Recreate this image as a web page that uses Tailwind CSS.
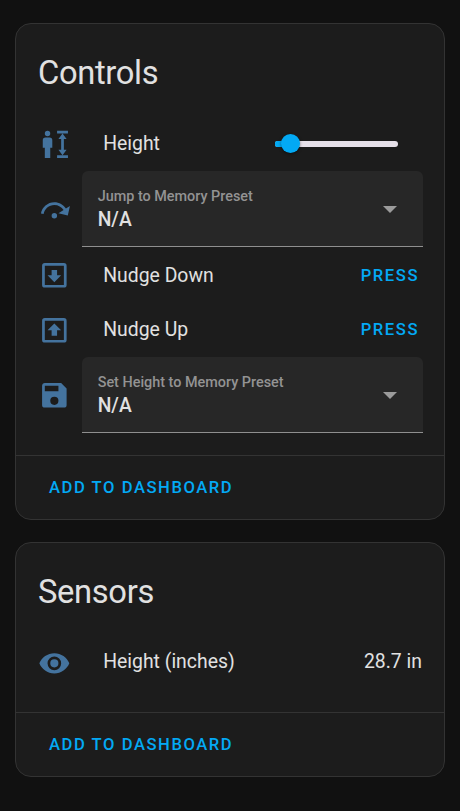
<!DOCTYPE html>
<html lang="en">
<head>
<meta charset="utf-8">
<title>Device</title>
<script src="https://cdn.jsdelivr.net/npm/@tailwindcss/browser@4"></script>
</head>
<body class="flex flex-col gap-[22px] bg-[#111111] px-[15px] pt-[23px] h-[811px] overflow-hidden font-[Roboto,sans-serif] text-[19.4px] text-[#e1e1e1]">
  <section class="flex h-[497px] shrink-0 flex-col rounded-[16px] border border-[#333333] bg-[#1c1c1c]">
    <h1 class="flex h-[93px] items-center pl-[22px] pt-[7px] text-[32.7px] tracking-[-0.01em]">Controls</h1>
    <div class="flex h-[54px] items-center pl-[22px] pr-[46px]">
      <svg class="size-[32.7px] shrink-0 fill-[#44739e]" viewBox="0 0 24 24"><path d="M7 2A2 2 0 1 1 7 6A2 2 0 0 1 7 2M5.5 7H8.5A2 2 0 0 1 10.5 9V14.5H9V22H5V14.5H3.5V9A2 2 0 0 1 5.5 7M14 2H22V4H14ZM14 20H22V22H14ZM18 4L21 8H19V16H21L18 20L15 16H17V8H15Z"/></svg>
      <span class="ml-[32.5px] grow">Height</span>
      <div class="relative h-[6px] w-[123px] rounded-[3px] bg-[#e6e0e9]">
        <div class="h-full w-[16px] rounded-l-[2px] bg-[#03a9f4]"></div>
        <div class="absolute -top-[7px] left-[6px] size-[19px] rounded-full bg-[#03a9f4] shadow-[0_1px_3px_rgba(0,0,0,0.5)]"></div>
      </div>
    </div>
    <div class="flex h-[76px] items-center pl-[22px] pr-[21px]">
      <svg class="mt-[2px] size-[32.7px] shrink-0 fill-[#44739e]" viewBox="0 0 24 24"><path d="M12 14A2 2 0 0 1 14 16A2 2 0 0 1 12 18A2 2 0 0 1 10 16A2 2 0 0 1 12 14M23.46 8.86L21.87 15.75L15 14.16L18.8 11.78C17.39 9.5 14.87 8 12 8C8.05 8 4.77 10.86 4.12 14.63L2.15 14.28C2.96 9.58 7.06 6 12 6C15.58 6 18.73 7.89 20.5 10.72L23.46 8.86Z"/></svg>
      <div class="ml-[11px] flex h-[76px] grow items-center justify-between rounded-t-[6px] border-b border-[#8f8f8f] bg-[#272727] pl-4 pr-[26px] pt-[2px]">
        <div class="flex flex-col">
          <span class="text-[14.4px] font-medium leading-[20px] text-[#939393]">Jump to Memory Preset</span>
          <span class="text-[19.3px] font-medium leading-[26px]">N/A</span>
        </div>
        <svg class="h-[7px] w-[14px] fill-[#9b9b9b]" viewBox="0 0 14 7"><path d="M0 0H14L7 7Z"/></svg>
      </div>
    </div>
    <div class="flex h-[55px] items-center pl-[22px] pr-[25px] pt-[2px]">
      <svg class="size-[32.7px] shrink-0 fill-[#44739e]" viewBox="0 0 24 24"><path d="M12 17L7 12H10V8H14V12H17L12 17M5 3H19A2 2 0 0 1 21 5V19A2 2 0 0 1 19 21H5A2 2 0 0 1 3 19V5A2 2 0 0 1 5 3M5 5V19H19V5H5Z"/></svg>
      <span class="ml-[32.5px] grow">Nudge Down</span>
      <button class="pt-px text-[16.6px] font-medium tracking-[1.55px] text-[#03a9f4]">PRESS</button>
    </div>
    <div class="flex h-[55px] items-center pl-[22px] pr-[25px] pt-px">
      <svg class="mt-px size-[32.7px] shrink-0 fill-[#44739e]" viewBox="0 0 24 24"><path d="M12 7L17 12H14V16H10V12H7L12 7M5 3H19A2 2 0 0 1 21 5V19A2 2 0 0 1 19 21H5A2 2 0 0 1 3 19V5A2 2 0 0 1 5 3M5 5V19H19V5H5Z"/></svg>
      <span class="ml-[32.5px] grow">Nudge Up</span>
      <button class="pt-px text-[16.6px] font-medium tracking-[1.55px] text-[#03a9f4]">PRESS</button>
    </div>
    <div class="flex h-[76px] items-center pl-[22px] pr-[21px]">
      <svg class="size-[32.7px] shrink-0 fill-[#44739e]" viewBox="0 0 24 24"><path d="M15 9H5V5H15M12 19A3 3 0 0 1 9 16A3 3 0 0 1 12 13A3 3 0 0 1 15 16A3 3 0 0 1 12 19M17 3H5C3.89 3 3 3.9 3 5V19A2 2 0 0 0 5 21H19A2 2 0 0 0 21 19V7L17 3Z"/></svg>
      <div class="ml-[11px] flex h-[76px] grow items-center justify-between rounded-t-[6px] border-b border-[#8f8f8f] bg-[#272727] pl-4 pr-[26px] pt-[2px]">
        <div class="flex flex-col">
          <span class="text-[14.4px] font-medium leading-[20px] text-[#939393]">Set Height to Memory Preset</span>
          <span class="text-[19.3px] font-medium leading-[26px]">N/A</span>
        </div>
        <svg class="h-[7px] w-[14px] fill-[#9b9b9b]" viewBox="0 0 14 7"><path d="M0 0H14L7 7Z"/></svg>
      </div>
    </div>
    <div class="mt-auto flex h-[64px] items-center border-t border-[#333333] pl-[33px] pt-[2px]">
      <button class="text-[16.6px] font-medium tracking-[1.55px] text-[#03a9f4]">ADD TO DASHBOARD</button>
    </div>
  </section>
  <section class="flex h-[235px] shrink-0 flex-col rounded-[16px] border border-[#333333] bg-[#1c1c1c]">
    <h1 class="flex h-[93px] items-center pl-[22px] pt-[7px] text-[32.7px] tracking-[-0.01em]">Sensors</h1>
    <div class="flex h-[54px] items-center pl-[22px] pr-[22px]">
      <svg class="size-[32.7px] shrink-0 fill-[#44739e]" viewBox="0 0 24 24"><path d="M12 9A3 3 0 0 0 9 12A3 3 0 0 0 12 15A3 3 0 0 0 15 12A3 3 0 0 0 12 9M12 17A5 5 0 0 1 7 12A5 5 0 0 1 12 7A5 5 0 0 1 17 12A5 5 0 0 1 12 17M12 4.5C7 4.5 2.73 7.61 1 12C2.73 16.39 7 19.5 12 19.5C17 19.5 21.27 16.39 23 12C21.27 7.61 17 4.5 12 4.5Z"/></svg>
      <span class="ml-[32.5px] grow pb-[2px]">Height (inches)</span>
      <span class="pb-[2px]">28.7 in</span>
    </div>
    <div class="mt-auto flex h-[64px] items-center border-t border-[#333333] pl-[33px] pt-[2px]">
      <button class="text-[16.6px] font-medium tracking-[1.55px] text-[#03a9f4]">ADD TO DASHBOARD</button>
    </div>
  </section>
</body>
</html>
